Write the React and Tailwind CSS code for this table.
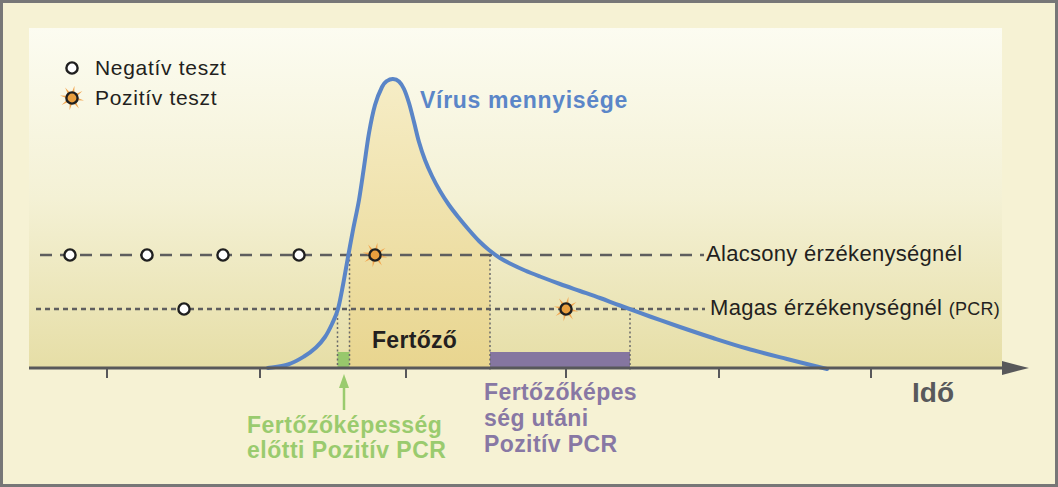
import React from 'react'

// curve of the virus amount, page coordinates
const CURVE = [
  [268, 368], [288, 364.5], [304, 356.5], [316, 347.5], [325, 337], [332, 324], [338, 309],
  [343, 285], [348, 257], [353, 230], [359, 200], [364, 167], [369, 133], [375, 105],
  [382, 87], [387, 81], [393, 79], [399, 81.5], [404, 89], [409, 103], [414, 122],
  [419, 142], [425, 160], [432, 176], [440, 191], [449, 205], [459, 218], [469, 230],
  [479, 241], [489, 250], [500, 258], [511, 264], [525, 270.5], [540, 276.5], [560, 284],
  [580, 291], [600, 298], [620, 305.5], [650, 316.5], [680, 327], [713, 338], [747, 348.5],
  [787, 359], [827, 369],
]

function smoothPath(pts) {
  let d = `M ${pts[0][0]} ${pts[0][1]}`
  for (let i = 0; i < pts.length - 1; i++) {
    const p0 = pts[i - 1] || pts[i]
    const p1 = pts[i]
    const p2 = pts[i + 1]
    const p3 = pts[i + 2] || p2
    const c1x = p1[0] + (p2[0] - p0[0]) / 6
    const c1y = p1[1] + (p2[1] - p0[1]) / 6
    const c2x = p2[0] - (p3[0] - p1[0]) / 6
    const c2y = p2[1] - (p3[1] - p1[1]) / 6
    d += ` C ${c1x.toFixed(2)} ${c1y.toFixed(2)} ${c2x.toFixed(2)} ${c2y.toFixed(2)} ${p2[0]} ${p2[1]}`
  }
  return d
}

const curvePath = smoothPath(CURVE)
const TICKS = [107, 260, 406, 566, 719, 871]

function NegDot({ x, y }) {
  return <circle cx={x} cy={y} r="5.6" fill="#fff" stroke="#1f1f1f" strokeWidth="2.4" />
}

function PosDot({ x, y }) {
  const rays = [0, 1, 2, 3, 4, 5, 6, 7].map((k) => {
    const a = (k * Math.PI) / 4 - Math.PI / 2 + 0.2
    const tip = [x + Math.cos(a) * 12.5, y + Math.sin(a) * 12.5]
    const px = -Math.sin(a) * 1.3
    const py = Math.cos(a) * 1.3
    const b1 = [x + Math.cos(a) * 5 + px, y + Math.sin(a) * 5 + py]
    const b2 = [x + Math.cos(a) * 5 - px, y + Math.sin(a) * 5 - py]
    return <polygon key={k} points={`${tip.join(',')} ${b1.join(',')} ${b2.join(',')}`} fill="#f2a54e" />
  })
  return (
    <g>
      {rays}
      <circle cx={x} cy={y} r="5.6" fill="#e89e3e" stroke="#1f1f1f" strokeWidth="2.4" />
    </g>
  )
}

function LegendRow({ positive, label }) {
  return (
    <div className="flex h-[30px] items-center gap-[11px]">
      <svg width="24" height="24" viewBox="0 0 24 24">
        {positive ? <PosDot x={12} y={12} /> : <NegDot x={12} y={12} />}
      </svg>
      <span className="text-[21px] leading-[30px] tracking-[0.7px] text-[#231f20]">{label}</span>
    </div>
  )
}

function Chart() {
  return (
    <svg className="absolute inset-0" width="1058" height="487" viewBox="0 0 1058 487">
      <defs>
        <linearGradient id="fillGrad" x1="0" y1="79" x2="0" y2="368" gradientUnits="userSpaceOnUse">
          <stop offset="0" stopColor="#f6edc6" />
          <stop offset="1" stopColor="#e8d58f" />
        </linearGradient>
        <clipPath id="infClip">
          <rect x="349" y="0" width="141" height="368" />
        </clipPath>
      </defs>

      {/* infectious area */}
      <path d={`${curvePath} L 268 368 Z`} fill="url(#fillGrad)" clipPath="url(#infClip)" />

      <rect x="337.5" y="352" width="12" height="16" fill="#98c86c" />
      <rect x="490" y="352" width="140" height="16" fill="#8576a0" />

      <g stroke="#6a6a6a" strokeWidth="1.5" strokeDasharray="2 2.5">
        <line x1="337.5" y1="309" x2="337.5" y2="368" />
        <line x1="349.5" y1="255" x2="349.5" y2="368" />
        <line x1="490" y1="255" x2="490" y2="372" />
        <line x1="630" y1="309" x2="630" y2="372" />
      </g>

      <line x1="40" y1="255" x2="704" y2="255" stroke="#5e5e5e" strokeWidth="2.5" strokeDasharray="12 8" />
      <line x1="36" y1="309" x2="705" y2="309" stroke="#5e5e5e" strokeWidth="2.5" strokeDasharray="5 4" />

      <path d={curvePath} fill="none" stroke="#5a85c7" strokeWidth="4" strokeLinecap="round" strokeLinejoin="round" />

      {[70, 147, 223, 299].map((x) => (
        <NegDot key={x} x={x} y={255} />
      ))}
      <PosDot x={375} y={255} />
      <NegDot x={184} y={309} />
      <PosDot x={566} y={309} />

      <line x1="29" y1="368" x2="1004" y2="368" stroke="#58585a" strokeWidth="3" />
      <polygon points="1002,361 1029,368 1002,375" fill="#58585a" />
      {TICKS.map((x) => (
        <line key={x} x1={x} y1="368" x2={x} y2="378" stroke="#58585a" strokeWidth="2" />
      ))}

      <line x1="344" y1="410" x2="344" y2="385" stroke="#9acb6e" strokeWidth="2.5" />
      <polygon points="339,388 344,374 349,388" fill="#9acb6e" />
    </svg>
  )
}

export default function App() {
  return (
    <div className="relative h-[487px] w-[1058px] overflow-hidden bg-[#f6f2d4] pl-[29px] pt-[28px] font-['Liberation_Sans',Arial,sans-serif] shadow-[inset_0_0_0_3px_#777777]">
      <div className="h-[340px] w-[973px] bg-linear-to-b from-[#fcfcf1] via-[#f4f1d5] to-[#e6dea6]" />

      <Chart />

      <div className="absolute left-[60px] top-[53px] flex flex-col">
        <LegendRow label="Negatív teszt" />
        <LegendRow positive label="Pozitív teszt" />
      </div>

      <div className="absolute left-[420px] top-[88.5px] whitespace-nowrap text-[23px] font-bold leading-[23px] tracking-[0.7px] text-[#5b86c8]">
        Vírus mennyisége
      </div>

      <div className="absolute left-[706px] top-[243.4px] whitespace-nowrap text-[22px] leading-[22px] tracking-[0.3px] text-[#231f20]">
        Alacsony érzékenységnél
      </div>
      <div className="absolute left-[710px] top-[297.4px] whitespace-nowrap text-[22px] leading-[22px] tracking-[0.3px] text-[#231f20]">
        Magas érzékenységnél <span className="text-[18px]">(PCR)</span>
      </div>

      <div className="absolute left-[372px] top-[328.5px] whitespace-nowrap text-[23px] font-bold leading-[23px] tracking-[0.3px] text-[#231f20]">
        Fertőző
      </div>

      <div className="absolute left-[247px] top-[412.5px] whitespace-nowrap text-[23px] font-bold leading-[25px] tracking-[0.5px] text-[#9acb6e]">
        Fertőzőképesség
        <br />
        előtti Pozitív PCR
      </div>

      <div className="absolute left-[484px] top-[379px] whitespace-nowrap text-[23px] font-bold leading-[26px] tracking-[0.4px] text-[#8878a4]">
        Fertőzőképes
        <br />
        ség utáni
        <br />
        Pozitív PCR
      </div>

      <div className="absolute left-[912px] top-[379.3px] text-[28px] font-bold leading-[28px] text-[#58595b]">Idő</div>
    </div>
  )
}
